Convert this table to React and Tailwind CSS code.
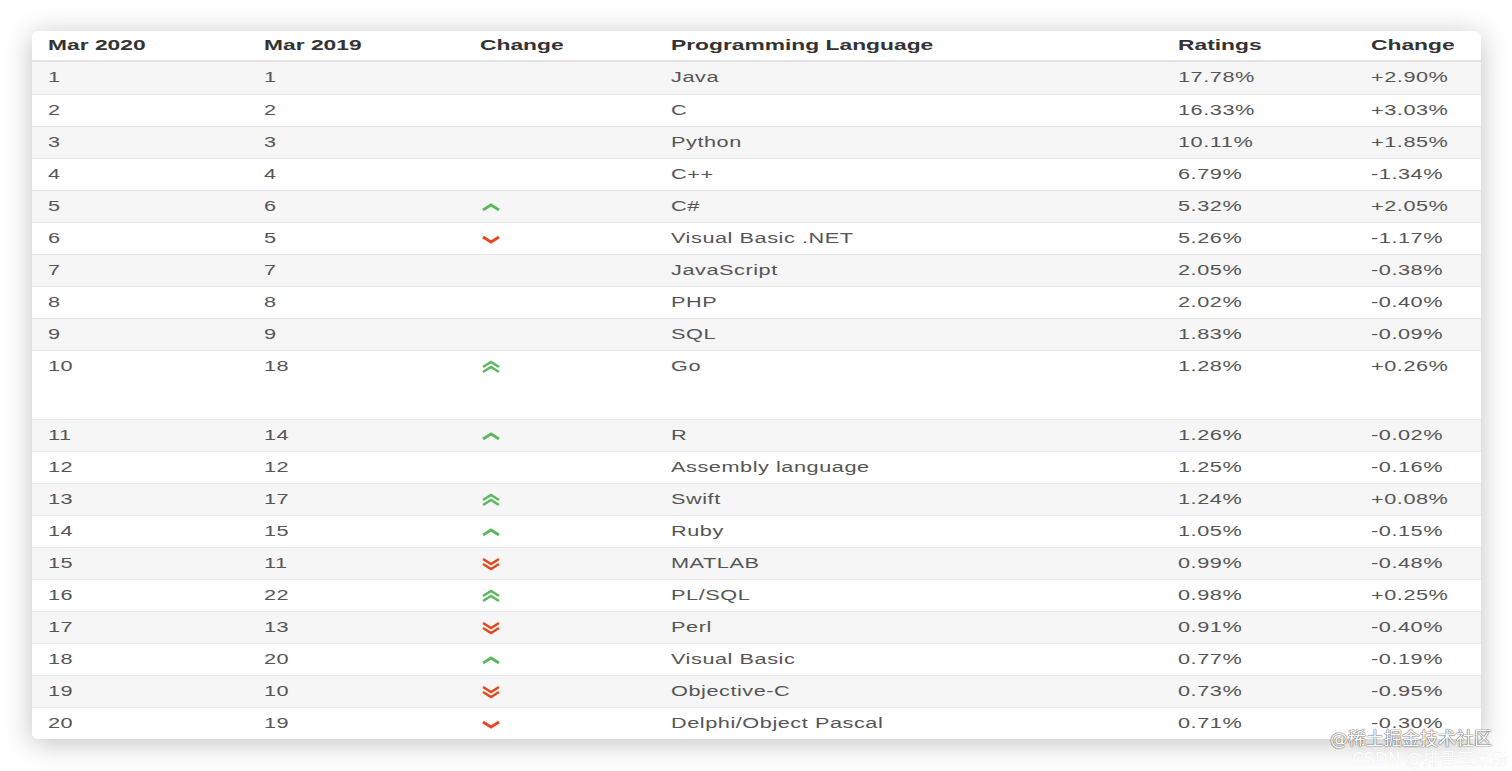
import React from 'react';

const rows = [
  ['1', '1', null, 'Java', '17.78%', '+2.90%'],
  ['2', '2', null, 'C', '16.33%', '+3.03%'],
  ['3', '3', null, 'Python', '10.11%', '+1.85%'],
  ['4', '4', null, 'C++', '6.79%', '-1.34%'],
  ['5', '6', 'up', 'C#', '5.32%', '+2.05%'],
  ['6', '5', 'down', 'Visual Basic .NET', '5.26%', '-1.17%'],
  ['7', '7', null, 'JavaScript', '2.05%', '-0.38%'],
  ['8', '8', null, 'PHP', '2.02%', '-0.40%'],
  ['9', '9', null, 'SQL', '1.83%', '-0.09%'],
  ['10', '18', 'up2', 'Go', '1.28%', '+0.26%'],
  ['11', '14', 'up', 'R', '1.26%', '-0.02%'],
  ['12', '12', null, 'Assembly language', '1.25%', '-0.16%'],
  ['13', '17', 'up2', 'Swift', '1.24%', '+0.08%'],
  ['14', '15', 'up', 'Ruby', '1.05%', '-0.15%'],
  ['15', '11', 'down2', 'MATLAB', '0.99%', '-0.48%'],
  ['16', '22', 'up2', 'PL/SQL', '0.98%', '+0.25%'],
  ['17', '13', 'down2', 'Perl', '0.91%', '-0.40%'],
  ['18', '20', 'up', 'Visual Basic', '0.77%', '-0.19%'],
  ['19', '10', 'down2', 'Objective-C', '0.73%', '-0.95%'],
  ['20', '19', 'down', 'Delphi/Object Pascal', '0.71%', '-0.30%'],
];

const cols = 'grid grid-cols-[216px_216px_191px_507px_193px_1fr] pl-4';

// the source screenshot is stretched sideways, so the glyphs are widened
const Wide = ({ children, head }) => (
  <span
    className={`inline-block origin-left whitespace-nowrap ${head ? 'scale-x-[1.52]' : 'scale-x-[1.55] tracking-[0.35px]'}`}
  >
    {children}
  </span>
);

const Trend = ({ kind }) => {
  if (!kind) return null;
  const up = kind.startsWith('up');
  const double = kind.endsWith('2');
  const color = up ? '#5cb85c' : '#e8461f';
  const one = (y) =>
    up
      ? `M2 ${y + 5} L10 ${y} L18 ${y + 5}`
      : `M2 ${y} L10 ${y + 5} L18 ${y}`;
  return (
    <svg width="20" height="14" viewBox="0 0 20 14" className="ml-[1px] mt-[3px]">
      {double ? (
        <>
          <path d={one(2)} fill="none" stroke={color} strokeWidth="2.4" />
          <path d={one(7)} fill="none" stroke={color} strokeWidth="2.4" />
        </>
      ) : (
        <path d={one(5)} fill="none" stroke={color} strokeWidth="2.8" />
      )}
    </svg>
  );
};

export default function App() {
  return (
    <div className="relative h-[771px] w-[1512px] overflow-hidden bg-white pl-8 pt-[31px] font-['Liberation_Sans',Arial,sans-serif]">
      <div className="w-[1449px] overflow-hidden rounded-md bg-white shadow-[0_4px_28px_rgba(0,0,0,0.25)]">
        <div className={`${cols} h-[31px] border-b-2 border-[#e3e3e3] pt-[5px] text-[15px] font-bold leading-[18px] text-[#333]`}>
          <div><Wide head>Mar 2020</Wide></div>
          <div><Wide head>Mar 2019</Wide></div>
          <div><Wide head>Change</Wide></div>
          <div><Wide head>Programming Language</Wide></div>
          <div><Wide head>Ratings</Wide></div>
          <div><Wide head>Change</Wide></div>
        </div>
        {rows.map((r, i) => (
          <div
            key={r[0]}
            className={`${cols} ${r[0] === '10' ? 'h-[69px]' : 'h-[32px]'} ${i % 2 === 0 ? 'bg-[#f6f6f6]' : 'bg-white'} ${i === 0 ? '' : 'border-t border-[#e6e6e6]'} pt-[6px] text-[14px] leading-[18px] text-[#555]`}
          >
            <div><Wide>{r[0]}</Wide></div>
            <div><Wide>{r[1]}</Wide></div>
            <div>
              <Trend kind={r[2]} />
            </div>
            <div><Wide>{r[3]}</Wide></div>
            <div><Wide>{r[4]}</Wide></div>
            <div><Wide>{r[5]}</Wide></div>
          </div>
        ))}
      </div>

      <div className="absolute left-[1330px] top-[727px] whitespace-nowrap text-[18px] leading-[24px] text-white font-['DejaVu_Sans','Noto_Sans_CJK_SC',sans-serif] [text-shadow:0_0_1px_#666,0_0_1px_#666,0_0_1px_#666]">
        @稀土掘金技术社区
      </div>
      <div className="absolute left-[1352px] top-[748px] whitespace-nowrap text-[17px] leading-[22px] text-white font-['DejaVu_Sans','Noto_Sans_CJK_SC',sans-serif] [text-shadow:0_0_1px_#d8d8d8]">
        CSDN @排骨玉米汤
      </div>
    </div>
  );
}
